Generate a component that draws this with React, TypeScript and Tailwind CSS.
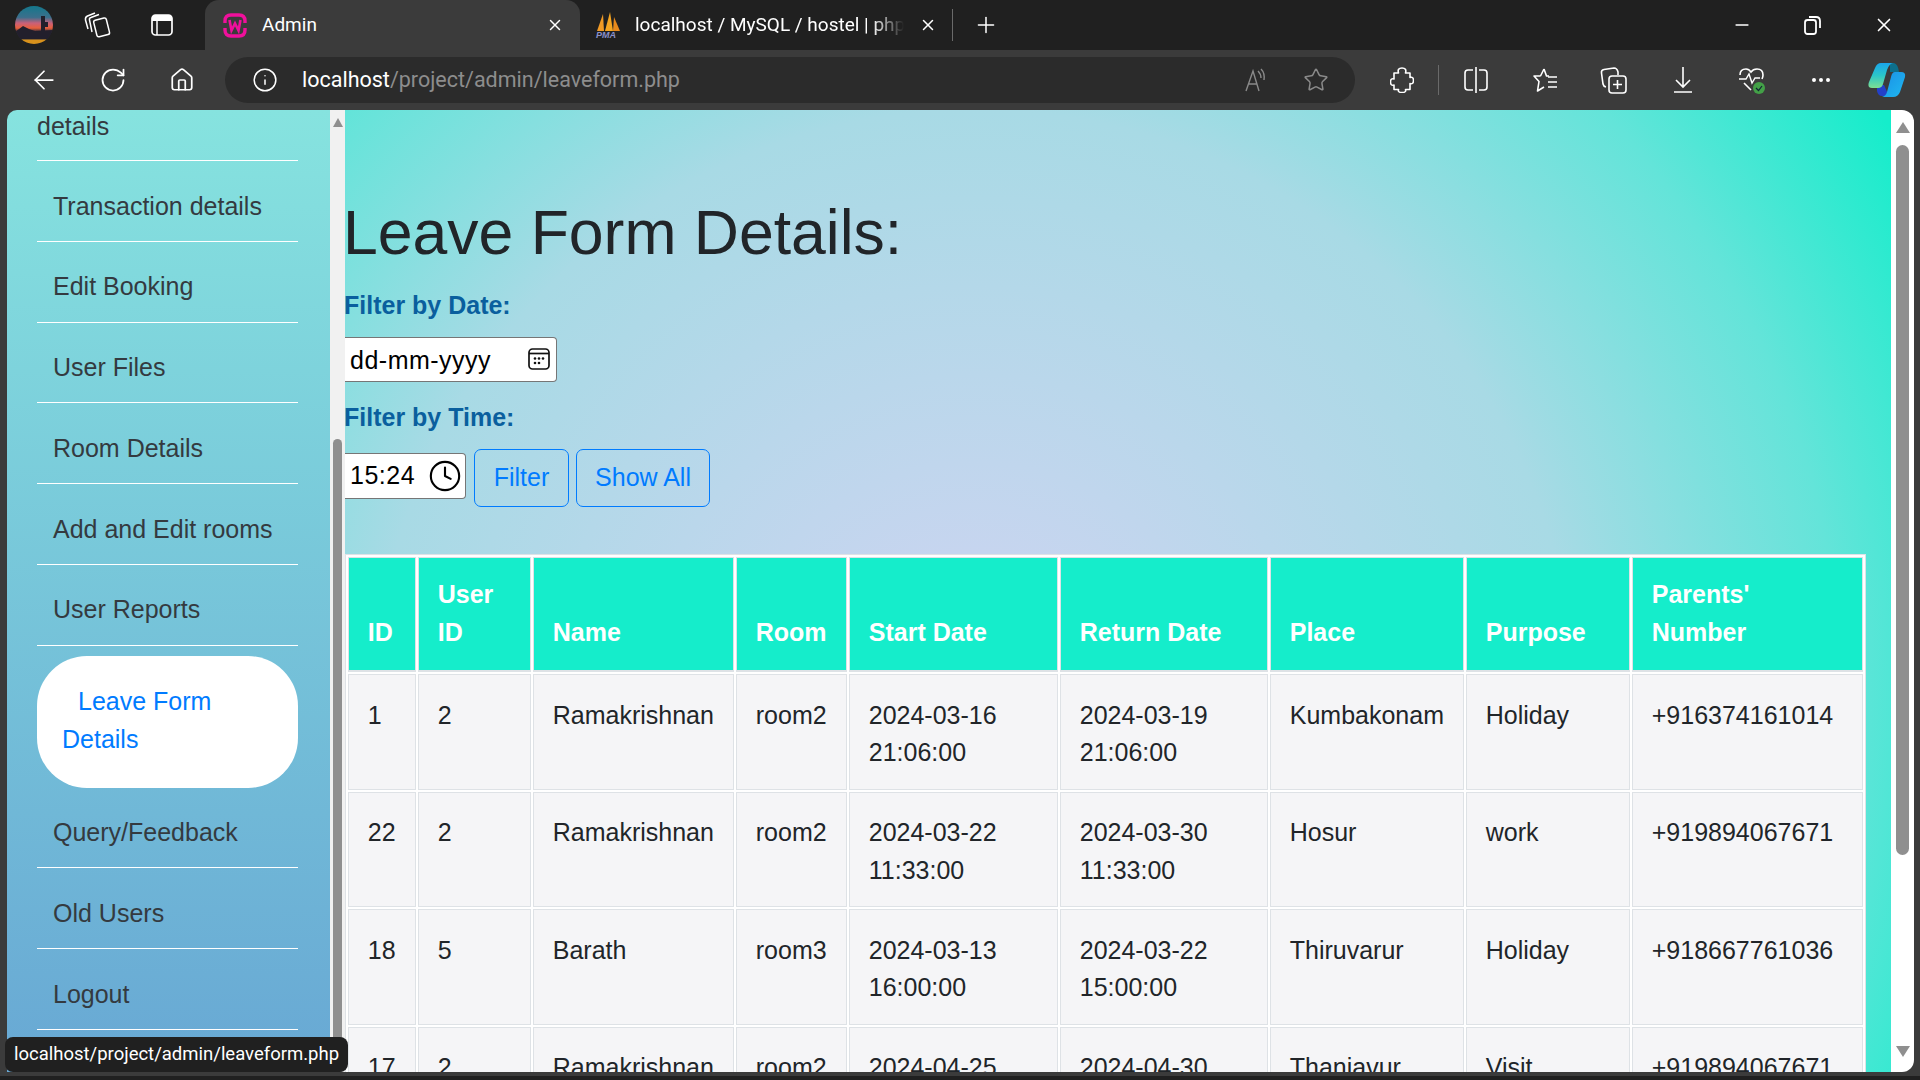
import { ArrowLeft, RotateCw, House, Info, Star, Plus, X, Minus, Ellipsis, Clock } from "lucide-react";

const navItems = ["Transaction details", "Edit Booking", "User Files", "Room Details", "Add and Edit rooms", "User Reports"];
const navItemsBottom = ["Query/Feedback", "Old Users", "Logout"];

const columns = [
  { label: ["ID"], width: 68 },
  { label: ["User", "ID"], width: 113 },
  { label: ["Name"], width: 201 },
  { label: ["Room"], width: 111 },
  { label: ["Start Date"], width: 209 },
  { label: ["Return Date"], width: 208 },
  { label: ["Place"], width: 194 },
  { label: ["Purpose"], width: 164 },
  { label: ["Parents'", "Number"], width: 231 },
];

const rows = [
  ["1", "2", "Ramakrishnan", "room2", "2024-03-16 21:06:00", "2024-03-19 21:06:00", "Kumbakonam", "Holiday", "+916374161014"],
  ["22", "2", "Ramakrishnan", "room2", "2024-03-22 11:33:00", "2024-03-30 11:33:00", "Hosur", "work", "+919894067671"],
  ["18", "5", "Barath", "room3", "2024-03-13 16:00:00", "2024-03-22 15:00:00", "Thiruvarur", "Holiday", "+918667761036"],
  ["17", "2", "Ramakrishnan", "room2", "2024-04-25 10:00:00", "2024-04-30 10:00:00", "Thanjavur", "Visit", "+919894067671"],
];

const Slot = ({ children }: { children: React.ReactNode }) => (
  <div className="w-[69px] flex items-center justify-center shrink-0">{children}</div>
);

const Avatar = () => (
  <svg width="38" height="38" viewBox="0 0 38 38">
    <defs>
      <linearGradient id="sky" x1="0" y1="0" x2="0" y2="1">
        <stop offset="0" stopColor="#14788c" />
        <stop offset="0.3" stopColor="#3c6f8c" />
        <stop offset="0.45" stopColor="#c9607a" />
        <stop offset="0.58" stopColor="#e8603c" />
        <stop offset="0.68" stopColor="#2c2a38" />
        <stop offset="0.86" stopColor="#2c2a38" />
        <stop offset="0.9" stopColor="#d8921c" />
        <stop offset="1" stopColor="#d8921c" />
      </linearGradient>
      <clipPath id="round">
        <circle cx="19" cy="19" r="19" />
      </clipPath>
    </defs>
    <circle cx="19" cy="19" r="19" fill="url(#sky)" />
    <g clipPath="url(#round)" fill="#221f2c">
      <path d="M0 26 L8 20 L14 23 L20 25 L38 24 V33 H0Z" />
      <path d="M26 26 V10 H30 V16 H33 V21 H30 V26Z" />
    </g>
  </svg>
);

const TabsIcon = () => (
  <svg width="28" height="28" viewBox="0 0 28 28" fill="none" stroke="white" strokeWidth="1.5">
    <rect x="12" y="8" width="13" height="17" rx="2" transform="rotate(-14 18 16)" />
    <path d="M9 21 L6.5 9 Q6 7 8 6.5 L16 3.5" />
    <path d="M5 18 L2.5 9 Q2 6 4.5 5 L12 2" />
  </svg>
);

const VerticalTabIcon = () => (
  <svg width="22" height="22" viewBox="0 0 22 22">
    <rect x="1" y="1" width="20" height="20" rx="3.5" fill="none" stroke="white" strokeWidth="1.7" />
    <path d="M1 4.5 Q1 1 4.5 1 H17.5 Q21 1 21 4.5 V7 H1Z" fill="white" />
    <path d="M6 7 V21" stroke="white" strokeWidth="1.5" />
  </svg>
);

const WampIcon = () => (
  <svg width="24" height="25" viewBox="0 0 24 25" fill="none" stroke="#f0109c">
    <path d="M2 10 V8 Q2 2 8 2 H16 Q22 2 22 8 V10 M22 15 V17 Q22 23 16 23 H8 Q2 23 2 17 V15" strokeWidth="3.4" />
    <path d="M6.5 7 L8.5 17.5 L12 10.5 L15.5 17.5 L17.5 7" strokeWidth="2.6" />
  </svg>
);

const PmaIcon = () => (
  <svg width="26" height="28" viewBox="0 0 26 28">
    <path d="M2 20 L8 3 L9 20Z" fill="#f29b25" />
    <path d="M10 20 L15 1 L18 20Z" fill="#f5a623" />
    <path d="M18 20 L19 6 L25 20Z" fill="#e88a1c" />
    <text x="1" y="27" fontSize="9" fontWeight="700" fontStyle="italic" fontFamily="Liberation Sans" fill="#8a90c8">PMA</text>
  </svg>
);

const CopilotIcon = () => (
  <svg width="38" height="34" viewBox="0 0 38 34">
    <defs>
      <linearGradient id="copA" x1="0" y1="0" x2="0" y2="1">
        <stop offset="0" stopColor="#1aa5ea" />
        <stop offset="0.5" stopColor="#2bc6c8" />
        <stop offset="1" stopColor="#7ddf92" />
      </linearGradient>
      <linearGradient id="copB" x1="0" y1="0" x2="1" y2="1">
        <stop offset="0" stopColor="#1b8fe6" />
        <stop offset="1" stopColor="#1fb8f0" />
      </linearGradient>
    </defs>
    <path d="M22 0 H26 Q30 1 31 9 H22Z" fill="#0d6f8c" />
    <path d="M9 22 H16 L21 33 H14 Q10 33 9 28Z" fill="#2340c8" />
    <path d="M13 0 H25 Q21 1 19 7 L15 21 Q14 25 10 25 H4 Q-1 25 1 19 L7 5 Q9 0 13 0Z" fill="url(#copA)" />
    <path d="M27 9 H33 Q38 9 37 14 L32 29 Q30 34 25 34 H14 Q18 33 19 29 L23 14 Q24 9 27 9Z" fill="url(#copB)" />
  </svg>
);

const ReadAloudIcon = () => (
  <svg width="26" height="26" viewBox="0 0 26 26" fill="none" stroke="#8a8a8a" strokeWidth="1.4">
    <path d="M2 24 L9 4 L15 24 M4.5 17 H13" />
    <path d="M14 4 Q17 7 17 11 M17 2 Q21 6 20 13" />
  </svg>
);

const PuzzleIcon = () => (
  <svg width="24" height="26" viewBox="0 0 24 26" fill="none" stroke="white" strokeWidth="1.6" strokeLinejoin="round">
    <path d="M8.5 6 Q7 1 12 1 Q17 1 15.5 6 H20 V10.5 Q23.5 9.5 23.5 13.5 Q23.5 17.5 20 16.5 V22.5 H15.5 Q16.5 25.5 12 25.5 Q7.5 25.5 8.5 22.5 H4 V18 Q0.5 19 0.5 15 Q0.5 11 4 12 V6Z" />
  </svg>
);

const SplitIcon = () => (
  <svg width="26" height="28" viewBox="0 0 26 28" fill="none" stroke="white" strokeWidth="1.6">
    <path d="M10 4 H5 Q2 4 2 7 V21 Q2 24 5 24 H10 M16 4 H21 Q24 4 24 7 V21 Q24 24 21 24 H16" />
    <path d="M13 1 V27" />
  </svg>
);

const FavoritesIcon = () => (
  <svg width="26" height="26" viewBox="0 0 26 26" fill="none" stroke="white" strokeWidth="1.6" strokeLinejoin="round">
    <path d="M12 2 L14.5 9 H17 M8.5 9 L12 2 M8.5 9 H2 L7 14.5 L5.5 24 L12 20" />
    <path d="M16 10 H25 M16 15 H25 M16 20 H25" />
  </svg>
);

const CollectionsIcon = () => (
  <svg width="27" height="27" viewBox="0 0 27 27" fill="none" stroke="white" strokeWidth="1.6">
    <path d="M6 20 Q3.5 19.5 3 17 L1.5 6 Q1 3 4 2.5 L14 1 Q17 1 18 5 V8" />
    <rect x="9" y="9" width="17" height="17" rx="3" />
    <path d="M17.5 13 V22 M13 17.5 H22" />
  </svg>
);

const DownloadIcon = () => (
  <svg width="20" height="26" viewBox="0 0 20 26" fill="none" stroke="white" strokeWidth="1.6">
    <path d="M10 0 V20 M3 13 L10 20 L17 13 M1 25 H19" />
  </svg>
);

const HealthIcon = () => (
  <svg width="28" height="28" viewBox="0 0 28 28" fill="none">
    <path d="M13 24 L6 17 M2 9 Q2 3 8 3 Q11 3 13 6 Q15 3 19 3 Q25 3 25 9 Q25 11 24 13" stroke="white" strokeWidth="1.6" />
    <path d="M1 13 H8 L11 8 L14 17 L17 12 H22" stroke="white" strokeWidth="1.4" />
    <circle cx="21" cy="22" r="6" fill="#43a047" />
    <path d="M18 22 L20.5 24.5 L24 20" stroke="#123" strokeWidth="1.2" />
  </svg>
);

const RestoreIcon = () => (
  <svg width="18" height="20" viewBox="0 0 18 20" fill="none" stroke="white" strokeWidth="1.8">
    <rect x="1" y="5" width="11" height="14" rx="2.5" />
    <path d="M5 2 H12 Q16 2 16 6 V13" />
  </svg>
);

const CalendarIcon = () => (
  <svg width="22" height="22" viewBox="0 0 22 22" fill="none" stroke="#111" strokeWidth="1.7">
    <rect x="1" y="1" width="20" height="20" rx="3.5" />
    <path d="M1 5.5 H21" />
    <g fill="#111" stroke="none">
      <circle cx="7" cy="10.5" r="1.3" />
      <circle cx="11" cy="10.5" r="1.3" />
      <circle cx="15" cy="10.5" r="1.3" />
      <circle cx="7" cy="15" r="1.3" />
      <circle cx="11" cy="15" r="1.3" />
    </g>
  </svg>
);

const Tabstrip = () => (
  <div className="h-[50px] shrink-0 bg-[#202020] flex items-stretch text-white font-['Roboto',sans-serif]">
    <div className="w-[205px] shrink-0 flex items-center">
      <div className="ml-[15px] w-[38px] flex justify-center"><Avatar /></div>
      <div className="ml-[30px] w-[28px]"><TabsIcon /></div>
      <div className="ml-[40px] w-[22px]"><VerticalTabIcon /></div>
    </div>
    <div className="w-[375px] shrink-0 bg-[#3b3b3b] rounded-t-[14px] flex items-center pl-[18px] pr-[16px]">
      <WampIcon />
      <span className="ml-[15px] text-[19px] flex-1">Admin</span>
      <X size={18} strokeWidth={2} />
    </div>
    <div className="w-[373px] shrink-0 flex items-center pl-[15px]">
      <PmaIcon />
      <span className="ml-[14px] text-[19px] w-[269px] whitespace-nowrap overflow-hidden [mask-image:linear-gradient(to_right,black_88%,transparent)]">localhost / MySQL / hostel | phpMyAdmin</span>
      <span className="ml-[15px]"><X size={18} strokeWidth={2} /></span>
      <span className="ml-[15px] w-px h-[32px] bg-[#6a6a6a]" />
    </div>
    <div className="ml-[20px] flex items-center"><Plus size={26} strokeWidth={1.4} /></div>
    <div className="flex-1" />
    <div className="flex items-center pr-[25px]">
      <Minus size={20} strokeWidth={2} />
      <div className="ml-[52px]"><RestoreIcon /></div>
      <div className="ml-[51px]"><X size={22} strokeWidth={1.8} /></div>
    </div>
  </div>
);

const Toolbar = () => (
  <div className="h-[60px] shrink-0 bg-[#3b3b3b] flex items-center text-white font-['Roboto',sans-serif]">
    <div className="ml-[9px] flex">
      <Slot><ArrowLeft size={30} strokeWidth={1.4} /></Slot>
      <Slot><RotateCw size={28} strokeWidth={1.5} /></Slot>
      <Slot><House size={26} strokeWidth={1.6} /></Slot>
    </div>
    <div className="ml-[9px] w-[1130px] h-[46px] rounded-full bg-[#2b2b2b] flex items-center shrink-0">
      <div className="ml-[27px]"><Info size={26} strokeWidth={1.4} /></div>
      <div className="ml-[24px] text-[21.5px] flex-1 whitespace-nowrap">
        localhost<span className="text-[#8d8d8d]">/project/admin/leaveform.php</span>
      </div>
      <ReadAloudIcon />
      <div className="ml-[33px] mr-[26px]"><Star size={26} strokeWidth={1.4} color="#8a8a8a" /></div>
    </div>
    <div className="ml-[12px] flex items-center">
      <Slot><PuzzleIcon /></Slot>
      <div className="w-[5px] flex justify-center"><div className="w-px h-[30px] bg-[#6a6a6a]" /></div>
      <Slot><SplitIcon /></Slot>
      <Slot><FavoritesIcon /></Slot>
      <Slot><CollectionsIcon /></Slot>
      <Slot><DownloadIcon /></Slot>
      <Slot><HealthIcon /></Slot>
      <Slot><Ellipsis size={24} strokeWidth={2} /></Slot>
      <Slot><div className="mr-[5px]"><CopilotIcon /></div></Slot>
    </div>
  </div>
);

const Sidebar = () => (
  <div className="w-[323px] shrink-0 overflow-hidden rounded-tl-[10px] bg-[linear-gradient(to_bottom,#86e3df,#68a8d4)] pl-[30px] pr-[32px] text-[25px] leading-[37.5px] text-[#343a40] font-['Liberation_Sans',Arial,sans-serif]">
    <div className="h-[51px] border-b border-white pt-px leading-[30px]">details</div>
    {navItems.map((item) => (
      <div key={item} className="h-[80.75px] pl-4 pt-[11px] flex items-center border-b border-white">{item}</div>
    ))}
    <div className="mt-[10.5px] h-[131.5px] bg-white rounded-[50px] px-[25px] py-[27px] indent-4 text-[#007bff]">
      Leave Form Details
    </div>
    {navItemsBottom.map((item) => (
      <div key={item} className="h-[80.75px] pl-4 pt-[11px] flex items-center border-b border-white">{item}</div>
    ))}
  </div>
);

const Main = () => (
  <div className="flex-1 min-w-0 overflow-hidden bg-[radial-gradient(circle_at_630px_600px,#c6d5ef_160px,#a8dae5_600px,#63e4d9_868px,#15edcb_1085px)] font-['Liberation_Sans',Arial,sans-serif] text-[#212529]">
    <h1 className="pt-[85px] -ml-[2px] text-[62.5px] leading-[75px] whitespace-nowrap">Leave Form Details:</h1>
    <div className="mt-[17px] -ml-[1px] text-[25px] leading-[37.5px] font-bold text-[#0a5f9e]">Filter by Date:</div>
    <div className="mt-[12px] w-[212px] h-[45px] bg-white border border-l-0 border-[#767676] rounded-r-[4px] flex items-center pl-[5px] pr-[6px] text-[25px] text-black">
      <span className="flex-1 pt-[3px] tracking-[0.5px]">dd-mm-yyyy</span>
      <CalendarIcon />
    </div>
    <div className="mt-[17px] -ml-[1px] text-[25px] leading-[37.5px] font-bold text-[#0a5f9e]">Filter by Time:</div>
    <div className="mt-[12.5px] flex items-center">
      <div className="mb-[4px] w-[121px] h-[46px] bg-white border border-l-0 border-[#767676] rounded-r-[4px] flex items-center pl-[5px] pr-[3px] text-[25px] text-black">
        <span className="flex-1 tracking-[0.5px]">15:24</span>
        <Clock size={34} strokeWidth={1.5} />
      </div>
      <button className="ml-[8px] w-[95px] h-[58px] border border-[#007bff] rounded-[7px] text-[25px] text-[#007bff]">Filter</button>
      <button className="ml-[7px] w-[134px] h-[58px] border border-[#007bff] rounded-[7px] text-[25px] text-[#007bff]">Show All</button>
    </div>
    <table className="mt-[47px] w-[1521px] table-fixed border-separate border-spacing-[2px] border border-[#dee2e6] bg-white text-[25px] leading-[37.5px]">
      <colgroup>
        {columns.map((c) => (
          <col key={c.label.join(" ")} style={{ width: c.width }} />
        ))}
      </colgroup>
      <thead>
        <tr>
          {columns.map((c) => (
            <th key={c.label.join(" ")} className="align-bottom text-left font-bold text-white bg-[#15edcb] border border-b-2 border-[#dee2e6] px-[18.75px] py-[18.75px]">
              {c.label.map((line) => (
                <div key={line}>{line}</div>
              ))}
            </th>
          ))}
        </tr>
      </thead>
      <tbody>
        {rows.map((row) => (
          <tr key={row[0]}>
            {row.map((cell, i) => (
              <td key={i} className="align-top bg-[#f5f5f7] border border-[#dee2e6] px-[18.75px] pt-[21.5px] pb-[17px]">{cell}</td>
            ))}
          </tr>
        ))}
      </tbody>
    </table>
  </div>
);

export default function App() {
  return (
    <div className="relative w-[1920px] h-[1080px] overflow-hidden flex flex-col bg-[#3b3b3b]">
      <Tabstrip />
      <Toolbar />
      <div className="h-[962px] shrink-0 flex pl-[7px] pr-[6px]">
        <Sidebar />
        <div className="w-[15px] shrink-0 bg-[#f1f1f1] flex flex-col items-center pt-[8px]">
          <div className="w-0 h-0 border-x-[5px] border-b-[9px] border-x-transparent border-b-[#8f8f8f]" />
          <div className="mt-[312px] w-[9px] flex-1 bg-[#8f8f8f] rounded-t-[5px]" />
        </div>
        <Main />
        <div className="w-[23px] shrink-0 bg-white rounded-tr-[12px] rounded-br-[12px] flex flex-col items-center pt-[12px] pb-[15px]">
          <div className="w-0 h-0 border-x-[7px] border-b-[11px] border-x-transparent border-b-[#8f8f8f]" />
          <div className="mt-[12px] w-[13px] h-[710px] bg-[#8f8f8f] rounded-[7px]" />
          <div className="flex-1" />
          <div className="w-0 h-0 border-x-[7px] border-t-[11px] border-x-transparent border-t-[#8f8f8f]" />
        </div>
      </div>
      <div className="h-[4px] shrink-0 bg-[#3b3b3b]" />
      <div className="flex-1 bg-[#202020]" />
      <div className="absolute left-[5px] top-[1037px] w-[343px] h-[35px] bg-[#202020] rounded-[8px] flex items-center justify-center text-[18.5px] text-white font-['Roboto',sans-serif]">
        localhost/project/admin/leaveform.php
      </div>
    </div>
  );
}
